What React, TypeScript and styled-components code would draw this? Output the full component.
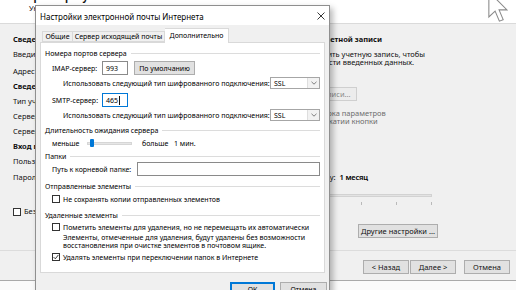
import React from "react";
import styled, {createGlobalStyle} from "styled-components";

const GlobalStyle = createGlobalStyle`
  html, body {
    margin: 0;
    padding: 0;
  }
  body {
    width: 516px;
    height: 290px;
    overflow: hidden;
    background: #fafafa;
    font-family: "Noto Sans", "Open Sans", sans-serif;
    font-size: 7.5px;
    color: #111;
  }
  * {
    box-sizing: border-box;
  }
`;

const Screen = styled.div`
  position: relative;
  width: 516px;
  height: 290px;
  overflow: hidden;
`;

/* ---------- window behind ---------- */

const BgWindow = styled.div`
  display: flex;
  flex-direction: column;
  height: 281px;
  background: #f0f0f0;
  border-bottom: 1px solid #a9a9a9;
`;

const BgHeader = styled.div`
  flex: none;
  height: 24px;
  padding-left: 20px;
  overflow: hidden;
  background: #fff;
  border-bottom: 1px solid #dadada;
`;

const BgHeading = styled.div`
  margin-top: -9px;
  font-size: 10px;
  font-weight: 700;
  line-height: 11px;
  white-space: nowrap;
  color: #111;
`;

const BgSubheading = styled.div`
  margin-top: 1px;
  padding-left: 9px;
  line-height: 10px;
  white-space: nowrap;
`;

const BgBody = styled.div`
  flex: 1;
  display: flex;
`;

const BgLeft = styled.div`
  width: 244px;
  padding: 8px 0 0 13px;
  display: flex;
  flex-direction: column;
`;

const BgRight = styled.div`
  width: 194px;
  padding-top: 8px;
  display: flex;
  flex-direction: column;
`;

const BgLine = styled.div<{ $mt?: number; $bold?: boolean; $muted?: boolean; $lh?: number; $ml?: number }>`
  margin-top: ${(p) => p.$mt || 0}px;
  margin-left: ${(p) => p.$ml || 0}px;
  height: ${(p) => p.$lh || 15}px;
  line-height: ${(p) => p.$lh || 15}px;
  white-space: nowrap;
  display: flex;
  align-items: center;
  font-weight: ${(p) => (p.$bold ? 700 : 400)};
  color: ${(p) => (p.$muted ? "#6d6d6d" : "#111")};
`;

const Strong = styled.span`
  margin-left: 4px;
  font-weight: 600;
  color: #000;
  letter-spacing: -0.2px;
`;

const BgButton = styled.div<{ $mt?: number; $w: number; $disabled?: boolean }>`
  margin-top: ${(p) => p.$mt || 0}px;
  width: ${(p) => p.$w}px;
  height: 14px;
  flex: none;
  display: flex;
  align-items: center;
  justify-content: center;
  white-space: nowrap;
  background: ${(p) => (p.$disabled ? "#ececec" : "#e1e1e1")};
  border: 1px solid ${(p) => (p.$disabled ? "#cfcfcf" : "#adadad")};
  color: ${(p) => (p.$disabled ? "#8a8a8a" : "#111")};
`;

const RightButton = styled(BgButton)`
  align-self: flex-end;
`;

const OfflineSlider = styled.div`
  margin-top: 10px;
  width: 188px;
  display: flex;
  flex-direction: column;
  gap: 5px;
`;

const OfflineTrack = styled.div`
  height: 3px;
  background: #e3e3e3;
  border: 1px solid #d2d2d2;
`;

const OfflineTicks = styled.div`
  height: 3px;
  background: repeating-linear-gradient(to left, #b9b9b9 0 1px, transparent 1px 35px);
`;

const BgFooter = styled.div`
  flex: none;
  height: 30px;
  border-top: 1px solid #dcdcdc;
  padding: 9px 6px 0 0;
  display: flex;
  justify-content: flex-end;
  align-items: flex-start;
`;

const FooterGap = styled.div<{ $w: number }>`
  width: ${(p) => p.$w}px;
`;

const Cursor = styled.svg`
  position: absolute;
  left: 488px;
  top: -9px;
`;

/* ---------- dialog ---------- */

const Dialog = styled.div`
  position: absolute;
  left: 35px;
  top: 5px;
  width: 295px;
  height: 300px;
  display: flex;
  flex-direction: column;
  font-size: 7px;
  color: #000;
  background: #f0f0f0;
  border: 1px solid #8f8f8f;
  box-shadow: 3px 3px 6px rgba(0, 0, 0, 0.28);
`;

const TitleBar = styled.div`
  height: 19px;
  flex: none;
  display: flex;
  align-items: center;
  justify-content: space-between;
  padding: 1px 4px 0 4px;
  background: #fff;
  font-size: 8px;
`;

const TabStrip = styled.div`
  height: 17px;
  flex: none;
  display: flex;
  align-items: flex-end;
  padding-left: 6px;
  position: relative;
  z-index: 1;
`;

const Tab = styled.div<{ $active?: boolean; $w: number }>`
  width: ${(p) => p.$w}px;
  height: ${(p) => (p.$active ? 15 : 11)}px;
  margin-bottom: ${(p) => (p.$active ? -1 : 0)}px;
  padding-bottom: ${(p) => (p.$active ? 2 : 0)}px;
  display: flex;
  align-items: center;
  justify-content: center;
  white-space: nowrap;
  background: ${(p) => (p.$active ? "#fff" : "#f0f0f0")};
  border: 1px solid #d9d9d9;
  border-bottom: ${(p) => (p.$active ? "none" : "1px solid #d9d9d9")};
  & + & {
    border-left: none;
  }
`;

const Panel = styled.div`
  margin: 0 4px;
  height: 231px;
  flex: none;
  padding: 3px 4px 0 4px;
  background: #fff;
  border: 1px solid #d9d9d9;
  display: flex;
  flex-direction: column;
`;

const GroupHeader = styled.div<{ $mt?: number }>`
  margin-top: ${(p) => p.$mt || 0}px;
  height: 12px;
  display: flex;
  align-items: center;
  gap: 4px;
  white-space: nowrap;
  &::after {
    content: "";
    flex: 1;
    height: 1px;
    background: #dcdcdc;
  }
`;

const Row = styled.div<{ $mt?: number; $h?: number; $indent?: number }>`
  margin-top: ${(p) => p.$mt || 0}px;
  height: ${(p) => p.$h || 12}px;
  padding-left: ${(p) => p.$indent ?? 7}px;
  display: flex;
  align-items: center;
  white-space: nowrap;
`;

const Label = styled.span<{ $w?: number }>`
  width: ${(p) => (p.$w ? `${p.$w}px` : "auto")};
  flex: none;
`;

const TextBox = styled.div<{ $w?: number; $focused?: boolean }>`
  width: ${(p) => (p.$w ? `${p.$w}px` : "auto")};
  flex: ${(p) => (p.$w ? "none" : 1)};
  height: 14px;
  display: flex;
  align-items: center;
  padding-left: 3px;
  background: #fff;
  border: 1px solid ${(p) => (p.$focused ? "#0078d7" : "#8a8a8a")};
`;

const Caret = styled.span`
  width: 1px;
  height: 9px;
  background: #111;
  margin-left: 1px;
`;

const Button = styled.div<{ $w: number; $default?: boolean; $ml?: number }>`
  width: ${(p) => p.$w}px;
  margin-left: ${(p) => p.$ml || 0}px;
  height: 14px;
  flex: none;
  display: flex;
  align-items: center;
  justify-content: center;
  white-space: nowrap;
  background: #e1e1e1;
  border: 1px solid ${(p) => (p.$default ? "#0078d7" : "#adadad")};
  box-shadow: ${(p) => (p.$default ? "inset 0 0 0 1px #0078d7" : "none")};
`;

const Select = styled.div`
  margin-left: auto;
  width: 50px;
  height: 12px;
  display: flex;
  align-items: center;
  justify-content: space-between;
  padding-left: 3px;
  background: #fff;
  border: 1px solid #a6a6a6;
`;

const SelectArrow = styled.span`
  width: 12px;
  height: 10px;
  display: flex;
  align-items: center;
  justify-content: center;
  background: #f2f2f2;
  border-left: 1px solid #dedede;
`;

const Track = styled.div`
  position: relative;
  width: 45px;
  height: 3px;
  margin: 0 10px 0 9px;
  background: #e6e6e6;
  border: 1px solid #d6d6d6;
`;

const Thumb = styled.span`
  position: absolute;
  left: 2px;
  top: -4px;
  width: 4px;
  height: 8px;
  border-radius: 1px;
  background: #0078d7;
`;

const Check = styled.span`
  width: 8px;
  height: 8px;
  flex: none;
  margin-right: 3px;
  display: flex;
  align-items: center;
  justify-content: center;
  background: #fff;
  border: 1px solid #333;
`;

const Note = styled.div`
  margin-top: 1px;
  padding-left: 18px;
  line-height: 8px;
  white-space: nowrap;
`;

const DialogFooter = styled.div`
  margin-top: 9px;
  padding-right: 2px;
  display: flex;
  justify-content: flex-end;
  gap: 5px;
`;

const CheckMark = () => (
  <svg width="6" height="6" viewBox="0 0 6 6">
    <path d="M0.6 3.1 L2.3 4.8 L5.4 0.9" fill="none" stroke="#222" strokeWidth="0.9" />
  </svg>
);

const Chevron = () => (
  <svg width="6" height="4" viewBox="0 0 6 4">
    <path d="M0.5 0.8 L3 3.2 L5.5 0.8" fill="none" stroke="#606060" strokeWidth="0.8" />
  </svg>
);

const CloseIcon = () => (
  <svg width="8" height="8" viewBox="0 0 8 8">
    <path d="M0.5 0.5 L7.5 7.5 M7.5 0.5 L0.5 7.5" stroke="#222" strokeWidth="0.9" />
  </svg>
);

const CheckBox = ({checked}: { checked?: boolean }) => (
  <Check>{checked && <CheckMark />}</Check>
);

const App: React.FC = () => {
  return (
    <Screen>
      <GlobalStyle />
      <BgWindow>
        <BgHeader>
          <BgHeading>Параметры учетных записей POP и IMAP</BgHeading>
          <BgSubheading>Укажите параметры почтового сервера для вашей учетной записи.</BgSubheading>
        </BgHeader>
        <BgBody>
          <BgLeft>
            <BgLine $bold>Сведения о пользователе</BgLine>
            <BgLine>Введите имя:</BgLine>
            <BgLine $mt={2}>Адрес электронной почты:</BgLine>
            <BgLine $bold>Сведения о сервере</BgLine>
            <BgLine>Тип учетной записи:</BgLine>
            <BgLine>Сервер входящей почты:</BgLine>
            <BgLine>Сервер исходящей почты (SMTP):</BgLine>
            <BgLine $bold>Вход в систему</BgLine>
            <BgLine>Пользователь:</BgLine>
            <BgLine $mt={1}>Пароль:</BgLine>
            <BgLine $mt={19}>
              <CheckBox />
              Безопасная проверка пароля (SPA)
            </BgLine>
          </BgLeft>
          <BgRight>
            <BgLine $bold>Проверка настроек учетной записи</BgLine>
            <BgLine $mt={3} $lh={8}>Рекомендуется проверить учетную запись, чтобы</BgLine>
            <BgLine $lh={8}>убедиться в правильности введенных данных.</BgLine>
            <BgButton $mt={21} $w={113} $disabled>Проверка учетной записи...</BgButton>
            <BgLine $mt={8} $lh={8} $muted>Автоматическая проверка параметров</BgLine>
            <BgLine $lh={8} $muted>учетной записи при нажатии кнопки</BgLine>
            <BgLine $mt={45} $lh={14} $ml={-5}>
              Хранить автономно почту:<Strong>1 месяц</Strong>
            </BgLine>
            <OfflineSlider>
              <OfflineTrack />
              <OfflineTicks />
            </OfflineSlider>
            <RightButton $mt={19} $w={80}>Другие настройки ...</RightButton>
          </BgRight>
        </BgBody>
        <BgFooter>
          <BgButton $w={46}>&lt; Назад</BgButton>
          <FooterGap $w={1} />
          <BgButton $w={46}>Далее &gt;</BgButton>
          <FooterGap $w={8} />
          <BgButton $w={46}>Отмена</BgButton>
        </BgFooter>
      </BgWindow>

      <Cursor width="20" height="32" viewBox="0 0 13 21">
        <path
          d="M0.5 0.5 L0.5 17 L4.6 13.2 L7.4 19.8 L9.9 18.8 L7.2 12.4 L12.4 12.4 Z"
          fill="#fff"
          stroke="#8a8a8a"
          strokeWidth="0.7"
        />
      </Cursor>

      <Dialog>
        <TitleBar>
          <span>Настройки электронной почты Интернета</span>
          <CloseIcon />
        </TitleBar>
        <TabStrip>
          <Tab $w={31}>Общие</Tab>
          <Tab $w={92}>Сервер исходящей почты</Tab>
          <Tab $w={64} $active>Дополнительно</Tab>
        </TabStrip>
        <Panel>
          <GroupHeader $mt={1}>Номера портов сервера</GroupHeader>
          <Row $mt={2} $h={14}>
            <Label $w={50}>IMAP-сервер:</Label>
            <TextBox $w={26}>993</TextBox>
            <Button $w={61} $ml={6}>По умолчанию</Button>
          </Row>
          <Row $mt={2} $indent={18}>
            <Label>Использовать следующий тип шифрованного подключения:</Label>
            <Select>
              SSL
              <SelectArrow><Chevron /></SelectArrow>
            </Select>
          </Row>
          <Row $mt={4} $h={14}>
            <Label $w={50}>SMTP-сервер:</Label>
            <TextBox $w={26} $focused>465<Caret /></TextBox>
          </Row>
          <Row $mt={2} $indent={18}>
            <Label>Использовать следующий тип шифрованного подключения:</Label>
            <Select>
              SSL
              <SelectArrow><Chevron /></SelectArrow>
            </Select>
          </Row>
          <GroupHeader $mt={3}>Длительность ожидания сервера</GroupHeader>
          <Row $mt={1}>
            <Label $w={26}>меньше</Label>
            <Track><Thumb /></Track>
            <Label $w={32}>больше</Label>
            <Label>1 мин.</Label>
          </Row>
          <GroupHeader $mt={1}>Папки</GroupHeader>
          <Row $h={14}>
            <Label $w={85}>Путь к корневой папке:</Label>
            <TextBox />
          </Row>
          <GroupHeader $mt={4}>Отправленные элементы</GroupHeader>
          <Row $mt={1}>
            <CheckBox />
            Не сохранять копии отправленных элементов
          </Row>
          <GroupHeader $mt={4}>Удаленные элементы</GroupHeader>
          <Row>
            <CheckBox />
            Пометить элементы для удаления, но не перемещать их автоматически
          </Row>
          <Note>
            Элементы, отмеченные для удаления, будут удалены без возможности
            <br />
            восстановления при очистке элементов в почтовом ящике.
          </Note>
          <Row $mt={1}>
            <CheckBox checked />
            Удалять элементы при переключении папок в Интернете
          </Row>
        </Panel>
        <DialogFooter>
          <Button $w={45} $default>ОК</Button>
          <Button $w={47}>Отмена</Button>
        </DialogFooter>
      </Dialog>
    </Screen>
  );
};

export default App;
